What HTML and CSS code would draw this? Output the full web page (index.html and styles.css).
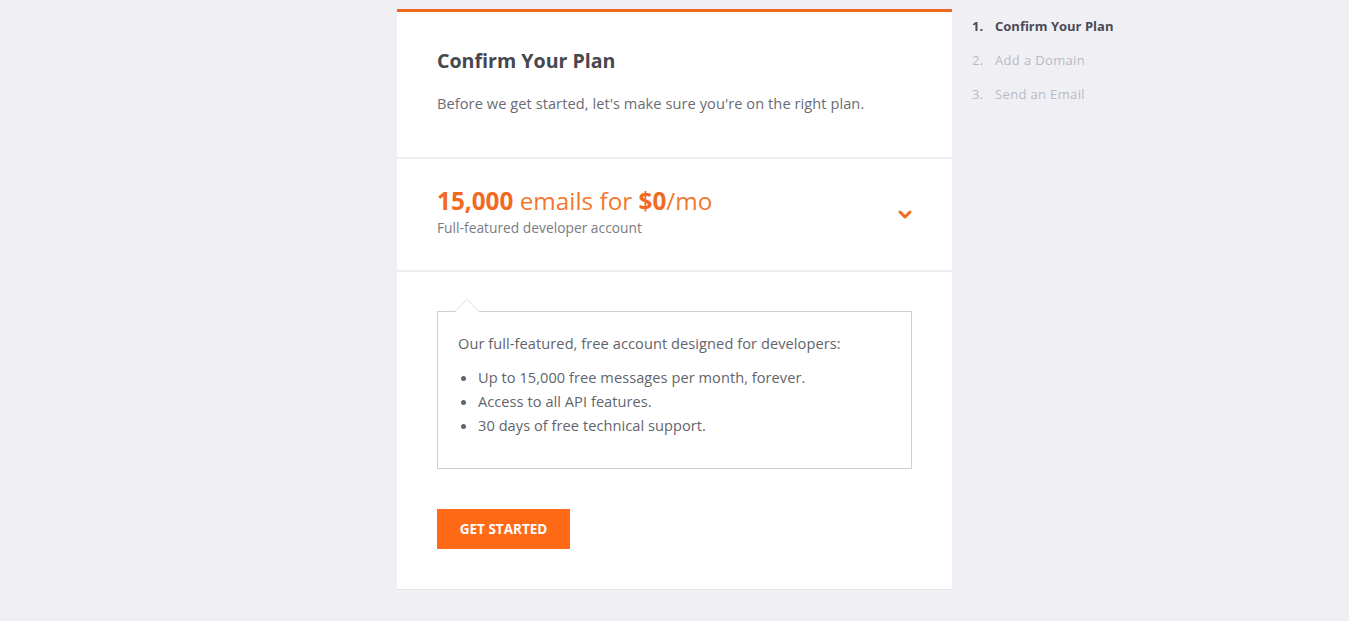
FILE: index.html
```html
<!DOCTYPE html>
<html>
<head>
<meta charset="utf-8">
<link rel="stylesheet" href="styles.css">
</head>
<body>
<div class="page">
  <div class="card">
    <section class="intro">
      <h1 class="title">Confirm Your Plan</h1>
      <p class="lead">Before we get started, let's make sure you're on the right plan.</p>
    </section>
    <section class="plan">
      <div class="plan-text">
        <div class="plan-name"><b>15,000</b> emails for <b>$0</b>/mo</div>
        <div class="plan-sub">Full-featured developer account</div>
      </div>
      <svg class="chev" width="14" height="10" viewBox="0 0 14 10"><path d="M2 2 L7 7 L12 2" fill="none" stroke="#f96b1c" stroke-width="3" stroke-linecap="round" stroke-linejoin="round"/></svg>
    </section>
    <section class="details">
      <div class="box">
        <p class="box-lead">Our full-featured, free account designed for developers:</p>
        <ul class="box-list">
          <li>Up to 15,000 free messages per month, forever.</li>
          <li>Access to all API features.</li>
          <li>30 days of free technical support.</li>
        </ul>
      </div>
      <button class="btn">GET STARTED</button>
    </section>
  </div>
  <ol class="steps">
    <li class="active"><span class="num">1.</span>Confirm Your Plan</li>
    <li><span class="num">2.</span>Add a Domain</li>
    <li><span class="num">3.</span>Send an Email</li>
  </ol>
</div>
</body>
</html>
```
FILE: styles.css
```css
html, body { margin: 0; padding: 0; }
body {
  background: #f0f0f4;
  font-family: "Open Sans", "Liberation Sans", sans-serif;
  color: #5d6068;
}
.page {
  display: flex;
  align-items: flex-start;
  padding-left: 397px;
  padding-top: 9px;
}
.card {
  width: 555px;
  background: #fff;
  border-top: 3px solid #f2671f;
  border-bottom: 1px solid #e4e4ea;
}
.intro {
  padding: 36px 40px 0;
  height: 109px;
  border-bottom: 2px solid #ececf1;
}
.title {
  margin: 0;
  font-size: 19.6px;
  font-weight: 700;
  color: #46474f;
  line-height: 26px;
}
.lead {
  margin: 19px 0 0;
  font-size: 14.6px;
  letter-spacing: 0.07px;
  line-height: 20px;
  color: #6a6c74;
}
.plan {
  display: flex;
  align-items: flex-start;
  justify-content: space-between;
  padding: 0 40px;
  height: 111px;
  border-bottom: 2px solid #ececf1;
}
.plan-text { padding-top: 27px; }
.plan-name {
  font-size: 24.3px;
  color: #f4772d;
  line-height: 30px;
  font-weight: 400;
}
.plan-name b { font-weight: 700; color: #f26a1f; }
.plan-sub {
  font-size: 13.8px;
  color: #7a7c84;
  line-height: 18px;
  margin-top: 3px;
}
.chev { align-self: center; }
.details {
  padding: 39px 40px 40px;
}
.box {
  position: relative;
  border: 1px solid #cfd0d6;
  padding: 21px 20px 31px;
}
.box::before, .box::after {
  content: "";
  position: absolute;
  left: 17px;
  width: 0; height: 0;
  border: 12px solid transparent;
  border-top: 0;
}
.box::before { top: -13px; border-bottom-color: #dcdde2; }
.box::after { top: -12px; border-bottom-color: #fff; }
.box-lead {
  margin: 0;
  font-size: 14.6px;
  letter-spacing: 0.07px;
  line-height: 20px;
  color: #62646c;
}
.box-list {
  margin: 12px 0 0;
  padding-left: 20px;
  font-size: 14.6px;
  letter-spacing: 0.05px;
  line-height: 24px;
  color: #62646c;
}
.btn {
  margin-top: 40px;
  display: block;
  width: 133px;
  height: 40px;
  background: #ff6a17;
  color: #fff;
  border: 0;
  border-radius: 0;
  font-family: inherit;
  font-weight: 700;
  font-size: 13.5px;
  padding: 0;
  cursor: pointer;
}
.steps {
  list-style: none;
  margin: 0 0 0 20px;
  padding: 0;
  font-size: 13px;
  line-height: 34px;
  color: #b9bbc3;
}
.steps .num { display: inline-block; width: 23px; }
.steps li:not(.active) { letter-spacing: 0.35px; }
.steps li.active { color: #4b4c56; font-weight: 700; }
```
